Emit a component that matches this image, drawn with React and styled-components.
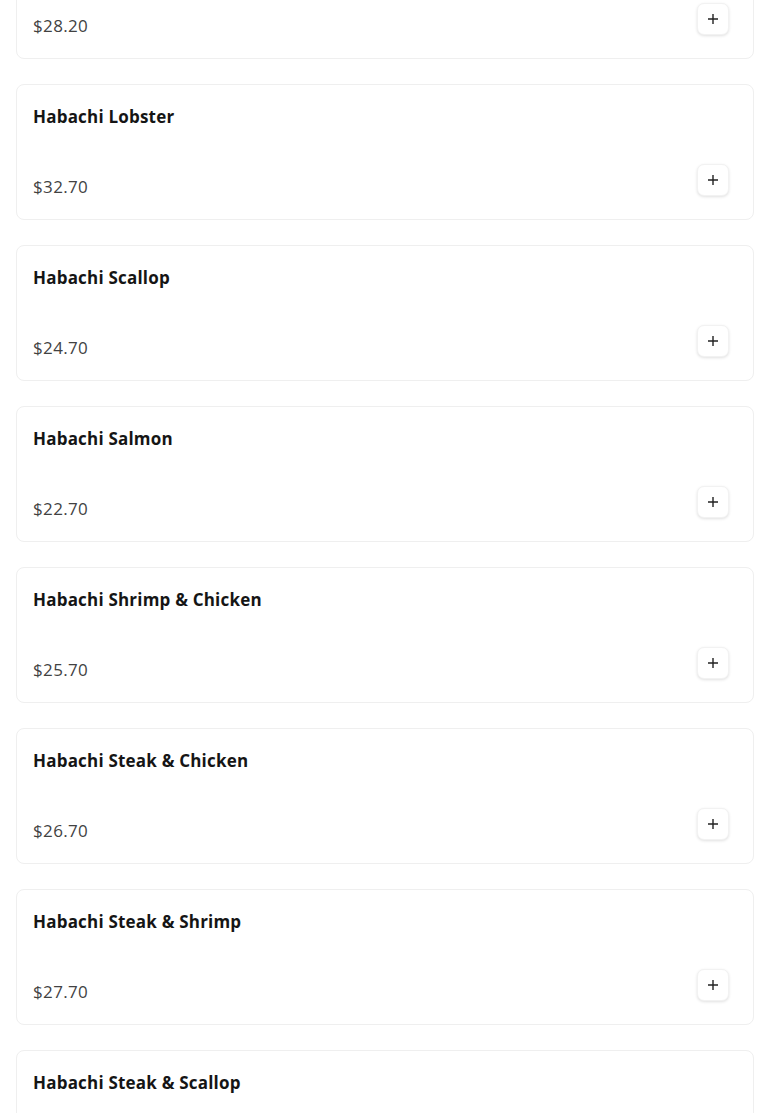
import React from 'react';
import styled, { createGlobalStyle } from 'styled-components';

const GlobalStyle = createGlobalStyle`
  body {
    margin: 0;
    background: #ffffff;
    font-family: "Open Sans", "Liberation Sans", sans-serif;
    overflow: hidden;
  }
`;

const MenuList = styled.div`
  display: flex;
  flex-direction: column;
  gap: 25px;
  padding: 0 16px;
  margin-top: -77px;
`;

const Card = styled.div`
  display: flex;
  flex-direction: column;
  padding: 20px 16px 22px;
  background: #fff;
  border: 1px solid #efefef;
  border-radius: 8px;
`;

const Title = styled.div`
  font-size: 17px;
  line-height: 24px;
  font-weight: 700;
  letter-spacing: 0.2px;
  color: #151515;
`;

const Footer = styled.div`
  display: flex;
  justify-content: space-between;
  align-items: flex-end;
  margin-top: 35px;
`;

const Price = styled.span`
  font-size: 17px;
  line-height: 20px;
  letter-spacing: 0.35px;
  color: #424242;
`;

const AddButton = styled.button`
  width: 32px;
  height: 32px;
  margin: 0 8px 1px 0;
  display: flex;
  align-items: center;
  justify-content: center;
  background: #fff;
  border: 1px solid #f2f2f2;
  border-radius: 7px;
  box-shadow: 0 1px 3px rgba(0, 0, 0, 0.12);
  padding: 0;
  cursor: pointer;
`;

const items = [
  { name: 'Habachi Shrimp', price: '28.20' },
  { name: 'Habachi Lobster', price: '32.70' },
  { name: 'Habachi Scallop', price: '24.70' },
  { name: 'Habachi Salmon', price: '22.70' },
  { name: 'Habachi Shrimp & Chicken', price: '25.70' },
  { name: 'Habachi Steak & Chicken', price: '26.70' },
  { name: 'Habachi Steak & Shrimp', price: '27.70' },
  { name: 'Habachi Steak & Scallop', price: '28.70' },
];

const PlusIcon = () => (
  <svg width="12" height="12" viewBox="0 0 12 12">
    <path d="M6 1v10M1 6h10" stroke="#222" strokeWidth="1.4" />
  </svg>
);

export default function App() {
  return (
    <>
      <GlobalStyle />
      <MenuList>
        {items.map((item) => (
          <Card key={item.name}>
            <Title>{item.name}</Title>
            <Footer>
              <Price>${item.price}</Price>
              <AddButton aria-label="Add">
                <PlusIcon />
              </AddButton>
            </Footer>
          </Card>
        ))}
      </MenuList>
    </>
  );
}
